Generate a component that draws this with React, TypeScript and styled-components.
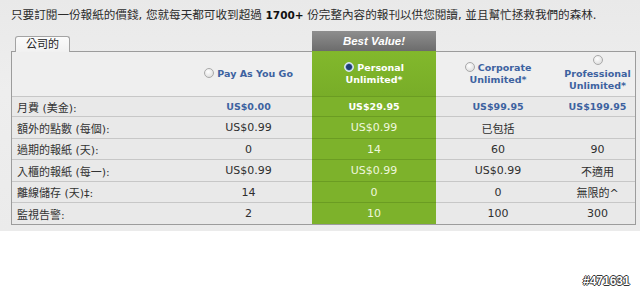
import React from 'react'
import styled, { createGlobalStyle } from 'styled-components'

const GlobalStyle = createGlobalStyle`
  html, body {
    margin: 0;
    padding: 0;
    background: #ffffff;
    font-family: "DejaVu Sans", "Noto Sans CJK TC", sans-serif;
  }
`

type Tone = 'plain' | 'green'

interface Plan {
  name: string[]
  checked: boolean
  tone: Tone
  values: string[]
}

const labels = ['月費 (美金):', '額外的點數 (每個):', '過期的報紙 (天):', '入櫃的報紙 (每一):', '離線儲存 (天)‡:', '監視告警:']
const rowHeights = [20, 22, 21, 22, 21, 22]

const plans: Plan[] = [
  { name: ['Pay As You Go'], checked: false, tone: 'plain', values: ['US$0.00', 'US$0.99', '0', 'US$0.99', '14', '2'] },
  { name: ['Personal', 'Unlimited*'], checked: true, tone: 'green', values: ['US$29.95', 'US$0.99', '14', 'US$0.99', '0', '10'] },
  { name: ['Corporate', 'Unlimited*'], checked: false, tone: 'plain', values: ['US$99.95', '已包括', '60', 'US$0.99', '0', '100'] },
  { name: ['Professional', 'Unlimited*'], checked: false, tone: 'plain', values: ['US$199.95', '', '90', '不適用', '無限的^', '300'] },
]

const App = () => {
  return (
    <>
      <GlobalStyle />
      <Page>
        <Intro>
          只要訂閱一份報紙的價錢, 您就每天都可收到超過 <Strong>1700+</Strong> 份完整內容的報刊以供您閱讀, 並且幫忙拯救我們的森林.
        </Intro>
        <TopStrip>
          <Tab>公司的</Tab>
          <span />
          <BestValue>Best Value!</BestValue>
        </TopStrip>
        <Table>
          <Row>
            <Cell $tone='plain' $first $height={45} />
            {plans.map((plan, i) => (
              <Cell key={i} $tone={plan.tone} $first $height={45}>
                <PlanName $tone={plan.tone}>
                  <Radio $checked={plan.checked} />{' '}
                  {plan.name.map((part, j) => (
                    <React.Fragment key={j}>
                      {j > 0 && (plan.name.length > 1 && i < 3 ? <br /> : ' ')}
                      {part}
                    </React.Fragment>
                  ))}
                </PlanName>
              </Cell>
            ))}
          </Row>
          {labels.map((label, r) => (
            <Row key={label}>
              <Cell $tone='plain' $height={rowHeights[r]} $label>
                {label}
              </Cell>
              {plans.map((plan, i) => (
                <Cell key={i} $tone={plan.tone} $height={rowHeights[r]}>
                  <Value $tone={plan.tone} $price={r === 0}>
                    {plan.values[r]}
                  </Value>
                </Cell>
              ))}
            </Row>
          ))}
        </Table>
      </Page>
      <Watermark>#471631</Watermark>
    </>
  )
}

const columns = '173px 127px 124px 124px 75px'

const Page = styled.div`
  background: linear-gradient(#e9e9e9, #eeeeee 40%, #ebebeb);
  padding: 0 4px 6px 11px;
`

const Intro = styled.div`
  height: 31px;
  box-sizing: border-box;
  padding-top: 8px;
  font-size: 11.6px;
  line-height: 15px;
  color: #2b2b2b;
  white-space: nowrap;
`

const Strong = styled.b`
  font-size: 10.5px;
  font-weight: bold;
  color: #111;
`

const TopStrip = styled.div`
  display: grid;
  grid-template-columns: 1px ${columns};
  height: 20px;
  align-items: end;
`

const Tab = styled.div`
  grid-column: 2;
  position: relative;
  z-index: 1;
  margin: 0 0 -1px 3px;
  width: 55px;
  height: 16px;
  box-sizing: border-box;
  border: 1px solid #a3a3a3;
  border-bottom: none;
  border-radius: 3px 3px 0 0;
  background: linear-gradient(#fbfbfb, #f1f1f1);
  font-size: 11px;
  line-height: 15px;
  text-align: center;
  color: #222;
`

const BestValue = styled.div`
  grid-column: 4;
  height: 20px;
  background: linear-gradient(#8e8e8e, #6c6c6c);
  color: #ffffff;
  font-family: "Liberation Sans", Arial, sans-serif;
  font-weight: bold;
  font-style: italic;
  font-size: 11.5px;
  line-height: 20px;
  text-align: center;
`

const Table = styled.div`
  border: 1px solid #9c9c9c;
  border-top: none;
  width: max-content;
`

const Row = styled.div`
  display: grid;
  grid-template-columns: ${columns};
`

interface CellProps {
  $tone: Tone
  $height: number
  $first?: boolean
  $label?: boolean
}

const Cell = styled.div<CellProps>`
  box-sizing: border-box;
  height: ${({ $height }) => $height}px;
  display: flex;
  align-items: center;
  justify-content: ${({ $label }) => ($label ? 'flex-start' : 'center')};
  padding: ${({ $label }) => ($label ? '0 0 0 5px' : '0 3px')};
  text-align: center;
  font-size: 11px;
  color: #333;
  background: ${({ $tone, $first }) =>
    $tone === 'green' ? ($first ? 'linear-gradient(#82b82c, #78ad28)' : '#7db22b') : $first ? '#efefef' : '#e9e9e9'};
  border-top: 1px solid
    ${({ $tone, $first }) => ($tone === 'green' ? ($first ? '#80b52b' : '#6b9c22') : $first ? '#9c9c9c' : '#c7c7c7')};
`

const PlanName = styled.div<{ $tone: Tone }>`
  font-weight: bold;
  font-size: 9.5px;
  line-height: 12.5px;
  color: ${({ $tone }) => ($tone === 'green' ? '#ffffff' : '#3d62a0')};
`

const Radio = styled.span<{ $checked: boolean }>`
  display: inline-block;
  width: 10px;
  height: 10px;
  border-radius: 50%;
  vertical-align: -1px;
  box-sizing: border-box;
  border: 1px solid ${({ $checked }) => ($checked ? '#d8e8f6' : '#a9a9a9')};
  background: ${({ $checked }) =>
    $checked ? 'radial-gradient(circle, #1f3f78 0 2.5px, #6f8fc0 3.2px, #e8f0fa 4px)' : 'radial-gradient(circle at 40% 35%, #ffffff, #d6d6d6)'};
`

const Value = styled.span<{ $tone: Tone; $price: boolean }>`
  font-weight: ${({ $price }) => ($price ? 'bold' : 'normal')};
  font-size: ${({ $price }) => ($price ? '9.5px' : '11px')};
  color: ${({ $tone, $price }) => ($tone === 'green' ? ($price ? '#ffffff' : '#eef7dd') : $price ? '#3d62a0' : '#2e2e2e')};
`

const Watermark = styled.div`
  position: absolute;
  left: 583px;
  top: 274px;
  font-family: "Liberation Sans", Arial, sans-serif;
  font-weight: bold;
  font-size: 12px;
  color: #ffffff;
  text-shadow: 1px 0 0 #333, -1px 0 0 #333, 0 1px 0 #333, 0 -1px 0 #333;
`

export default App
